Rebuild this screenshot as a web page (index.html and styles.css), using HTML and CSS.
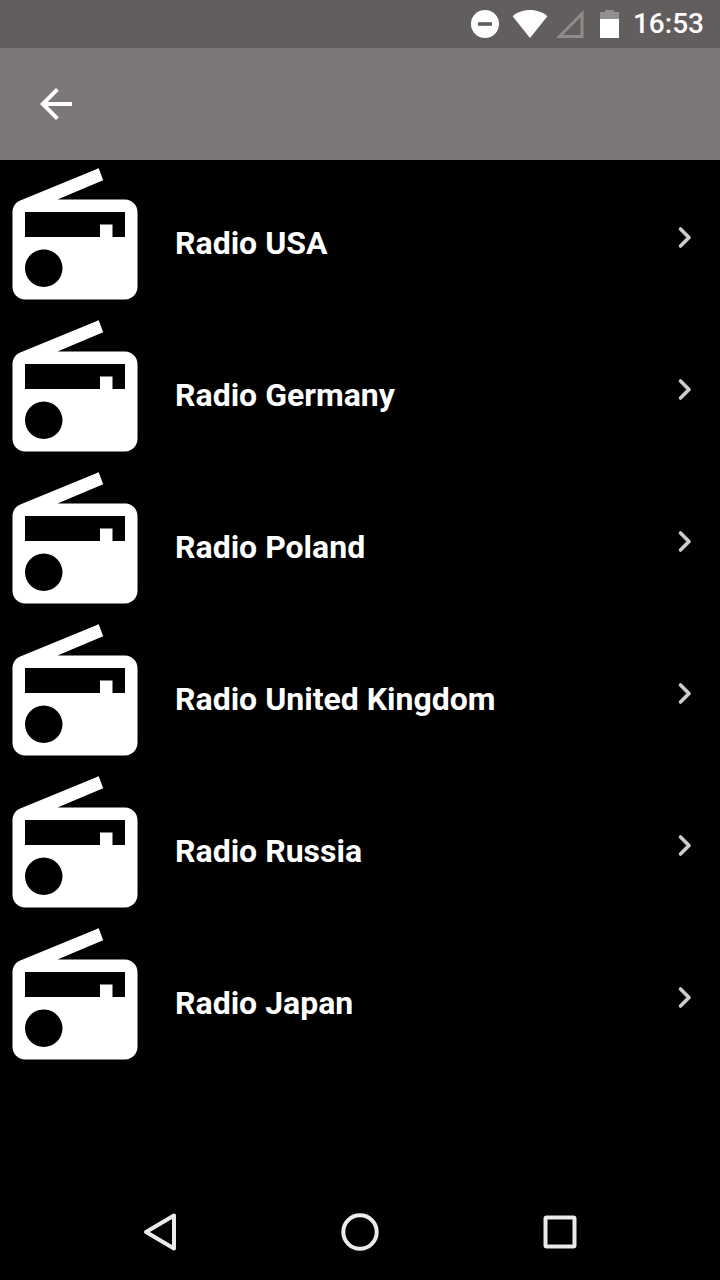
FILE: index.html
```html
<!DOCTYPE html>
<html lang="en">
<head>
  <meta charset="UTF-8">
  <meta name="viewport" content="width=device-width, initial-scale=1.0">
  <title>Radio</title>
  <link rel="stylesheet" href="styles.css">
</head>
<body>
  <svg class="sprite" aria-hidden="true">
    <symbol id="radio" viewBox="0 0 24 24">
      <path d="M3.24 6.15C2.51 6.43 2 7.17 2 8v12c0 1.1.89 2 2 2h16c1.11 0 2-.9 2-2V8c0-1.11-.89-2-2-2H9.2l7.3-3.1L15.8 1 3.24 6.15zM7 20c-1.66 0-3-1.34-3-3s1.34-3 3-3 3 1.34 3 3-1.34 3-3 3zm13-8h-2v-2h-2v2H4V8h16v4z"/>
    </symbol>
    <symbol id="chevron" viewBox="0 0 16 24">
      <path d="M3.500 4 12 12.500l-8.500 8.500" fill="none" stroke="currentColor" stroke-width="3.600" stroke-linecap="round" stroke-linejoin="round"/>
    </symbol>
  </svg>

  <div class="status-bar">
    <svg class="status-icon" width="28" height="28" viewBox="0 0 28 28">
      <circle cx="14" cy="14" r="14"/>
      <path d="M7 12.200h14v3.600H7z" fill="#625e5d"/>
    </svg>
    <svg class="status-icon wifi" width="36" height="28" viewBox="0 0 36 28">
      <path d="M18 28 .6 6.200C5 2.300 11 0 18 0s13 2.300 17.400 6.200z"/>
    </svg>
    <svg class="status-icon signal" width="28" height="28" viewBox="0 0 28 28">
      <path d="M0 28h27.500V0zM7 25h17.500V7.200z" fill="#8f8b8a" fill-rule="evenodd"/>
    </svg>
    <svg class="status-icon battery" width="19" height="28" viewBox="0 0 19 28">
      <path d="M0 2h5V0h9v2h5v8H0z" fill="#92908f"/>
      <path d="M0 9h19v19H0z"/>
    </svg>
    <time class="clock">16:53</time>
  </div>

  <header class="toolbar">
    <button class="back" type="button" aria-label="Back">
      <svg width="48" height="48" viewBox="0 0 24 24">
        <path d="M20 11H7.830l5.590-5.590L12 4l-8 8 8 8 1.410-1.410L7.830 13H20v-2z"/>
      </svg>
    </button>
  </header>

  <main>
    <ul class="stations">
      <li>
        <a class="station" href="#usa">
          <svg class="station-icon"><use href="#radio"/></svg>
          <span class="station-name">Radio USA</span>
          <svg class="chevron"><use href="#chevron"/></svg>
        </a>
      </li>
      <li>
        <a class="station" href="#germany">
          <svg class="station-icon"><use href="#radio"/></svg>
          <span class="station-name">Radio Germany</span>
          <svg class="chevron"><use href="#chevron"/></svg>
        </a>
      </li>
      <li>
        <a class="station" href="#poland">
          <svg class="station-icon"><use href="#radio"/></svg>
          <span class="station-name">Radio Poland</span>
          <svg class="chevron"><use href="#chevron"/></svg>
        </a>
      </li>
      <li>
        <a class="station" href="#united-kingdom">
          <svg class="station-icon"><use href="#radio"/></svg>
          <span class="station-name">Radio United Kingdom</span>
          <svg class="chevron"><use href="#chevron"/></svg>
        </a>
      </li>
      <li>
        <a class="station" href="#russia">
          <svg class="station-icon"><use href="#radio"/></svg>
          <span class="station-name">Radio Russia</span>
          <svg class="chevron"><use href="#chevron"/></svg>
        </a>
      </li>
      <li>
        <a class="station" href="#japan">
          <svg class="station-icon"><use href="#radio"/></svg>
          <span class="station-name">Radio Japan</span>
          <svg class="chevron"><use href="#chevron"/></svg>
        </a>
      </li>
    </ul>
  </main>

  <nav class="nav-bar">
    <button type="button" aria-label="Back">
      <svg width="40" height="40" viewBox="0 0 40 40">
        <path d="M34 3.500v33L6 20z"/>
      </svg>
    </button>
    <button type="button" aria-label="Home">
      <svg width="40" height="40" viewBox="0 0 40 40">
        <circle cx="20" cy="20" r="16.700"/>
      </svg>
    </button>
    <button type="button" aria-label="Recent apps">
      <svg width="40" height="40" viewBox="0 0 40 40">
        <rect x="5.500" y="5.500" width="29" height="29" rx="1"/>
      </svg>
    </button>
  </nav>
</body>
</html>
```
FILE: styles.css
```css
* {
  box-sizing: border-box;
}

body {
  display: flex;
  flex-direction: column;
  min-height: 100vh;
  margin: 0;
  background: #000;
  color: #fff;
  font-family: Roboto, sans-serif;
}

button {
  display: flex;
  align-items: center;
  justify-content: center;
  padding: 0;
  border: 0;
  background: none;
  color: inherit;
  cursor: pointer;
}

svg {
  fill: currentColor;
}

.sprite {
  position: absolute;
  width: 0;
  height: 0;
}

/* Status bar */
.status-bar {
  display: flex;
  align-items: center;
  justify-content: flex-end;
  height: 48px;
  padding-right: 16px;
  background: #625e5d;
}

.status-icon {
  flex: none;
}

.wifi {
  margin-left: 13px;
}

.signal {
  margin-left: 8px;
}

.battery {
  margin-left: 16px;
}

.clock {
  margin-left: 14px;
  font-size: 28px;
  font-weight: 500;
  line-height: 50px;
}

/* Toolbar */
.toolbar {
  display: flex;
  align-items: center;
  height: 112px;
  padding: 0 32px;
  background: #7c7877;
}

.back {
  width: 48px;
  height: 48px;
}

/* Station list */
main {
  flex: 1;
}

.stations {
  margin: 0;
  padding: 0;
  list-style: none;
}

.station {
  display: flex;
  align-items: center;
  padding: 2px 27px 0 0;
  color: inherit;
  text-decoration: none;
}

.station-icon {
  flex: none;
  width: 150px;
  height: 150px;
}

.station-name {
  flex: 1;
  margin-left: 25px;
  padding-top: 12px;
  font-size: 32px;
  font-weight: 700;
  line-height: 40px;
}

.chevron {
  flex: none;
  width: 16px;
  height: 24px;
  color: #ccc;
}

/* Navigation bar */
.nav-bar {
  display: flex;
  height: 96px;
  padding: 0 60px;
}

.nav-bar button {
  flex: 1;
}

.nav-bar svg {
  fill: none;
  stroke: #ebebeb;
  stroke-width: 4;
  stroke-linejoin: round;
}
```
